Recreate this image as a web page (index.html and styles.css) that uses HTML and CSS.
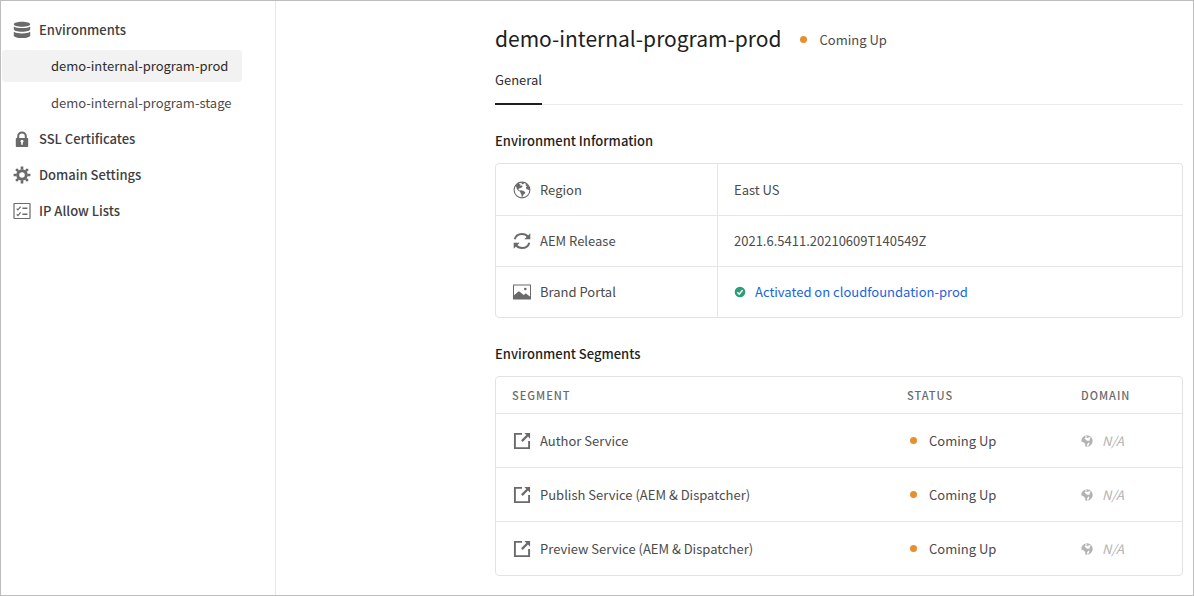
FILE: index.html
```html
<!DOCTYPE html>
<html lang="en">
<head>
<meta charset="utf-8">
<meta name="viewport" content="width=device-width, initial-scale=1">
<title>demo-internal-program-prod</title>
<link rel="stylesheet" href="styles.css">
</head>
<body>
<svg class="sprite" aria-hidden="true">
  <symbol id="icon-globe" viewBox="0 0 18 18">
    <circle cx="9" cy="9" r="7.900" fill="none" stroke="currentColor" stroke-width="1.100"/>
    <path d="M2.400 4.600 4.500 2.200 6.400 1.400 6 2.900 7.500 3.600 7.300 5 9 4.300 9.600 5.600 8 7 6.400 7.300 5.300 8.400 6.400 9.500 8.300 9.300 10.500 10 12.300 11.200 11.800 12.700 10.500 13.600 9.800 15.500 8.700 15.900 8.400 13.500 7.500 12 7.200 10.700 5 9.600 3.800 7.800 3.300 6z"/>
    <path d="M8 1.300 11.300 1.500 10.500 3 9 3.200zM13 2.600 15.300 4.800 16.700 7.800 16.500 9.500 15 8.600 13.500 8.200 12.900 6.600 13.900 5.400 12.600 4.200z"/>
  </symbol>
  <symbol id="icon-globe-solid" viewBox="0 0 12 12">
    <circle cx="6" cy="6" r="5.700"/>
    <path fill="#fff" d="M4.300 0 5.900 1.200 5 2.300 6.800 3 8.600 2.100 9.800 2.700 8.500 4.300 9 5.200 7.600 5.800 6.300 5.700 5.200 5.200 4.500 4.300 3.500 3.300 4.700 2.500zM0 6.600 2 7 3.300 8 4.300 9.600 4.100 12 1.600 10.800zM7.300 7.500 8.400 8 8.100 9.500 6.400 12 6 9.800z"/>
  </symbol>
  <symbol id="icon-open" viewBox="0 0 18 18">
    <path d="M9 1.900H1.900v14.200h14.200V9" fill="none" stroke="currentColor" stroke-width="1.900"/>
    <path d="M11.300.9H17.100v5.800l-2.100-2.100-5.300 5.300-1.600-1.600L13.400 3z"/>
  </symbol>
</svg>
<div class="app">
  <nav class="sidebar" aria-label="Environments">
    <ul class="nav">
      <li>
        <a class="nav-link" href="#">
          <svg class="icon" viewBox="0 0 18 18" aria-hidden="true"><path d="M9 .8c4.700 0 8.200 1 8.200 2.500S13.700 5.800 9 5.800.8 4.800.8 3.300 4.300.8 9 .8zM.8 5.400C2.300 6.600 5.300 7.100 9 7.100s6.700-.5 8.200-1.700v2.900c0 1.500-3.500 2.500-8.200 2.500S.8 9.800.8 8.300zM.8 10.800C2.300 12 5.300 12.500 9 12.500s6.700-.5 8.200-1.700v3.700c0 1.500-3.500 2.600-8.200 2.600S.8 16 .8 14.500z"/></svg>
          Environments
        </a>
        <ul class="subnav">
          <li><a class="nav-link nav-link-sub is-active" href="#" aria-current="page">demo-internal-program-prod</a></li>
          <li><a class="nav-link nav-link-sub" href="#">demo-internal-program-stage</a></li>
        </ul>
      </li>
      <li>
        <a class="nav-link" href="#">
          <svg class="icon" viewBox="0 0 18 18" aria-hidden="true"><path fill-rule="evenodd" d="M4.200 8V6.200a4.800 4.800 0 0 1 9.600 0V8h.7c.4 0 .7.3.7.7v7.600c0 .4-.3.7-.7.7h-11c-.4 0-.7-.3-.7-.7V8.700c0-.4.3-.7.7-.7zM6.200 8h5.600V6.200a2.800 2.800 0 0 0-5.600 0zM8.200 14.800h1.600v-2.200a1.500 1.500 0 1 0-1.600 0z"/></svg>
          SSL Certificates
        </a>
      </li>
      <li>
        <a class="nav-link" href="#">
          <svg class="icon" viewBox="0 0 18 18" aria-hidden="true">
            <g stroke="currentColor" stroke-width="2.600"><path d="M9 .6v3M9 14.400v3M.6 9h3M14.400 9h3M3.100 3.100l2.100 2.100M12.800 12.800l2.100 2.100M14.900 3.100l-2.100 2.100M5.200 12.800l-2.100 2.100"/></g>
            <circle cx="9" cy="9" r="4.300" fill="none" stroke="currentColor" stroke-width="3"/>
          </svg>
          Domain Settings
        </a>
      </li>
      <li>
        <a class="nav-link" href="#">
          <svg class="icon" viewBox="0 0 18 18" aria-hidden="true"><g fill="none" stroke="currentColor"><rect x="1" y="1.500" width="16" height="15" rx=".5" stroke-width="1.200"/><path d="M9.400 6.300h5M9.400 12.200h5" stroke-width="1.600"/><path d="m3.700 6.700 1.200 1.200 2.700-3.300M3.700 12.400l1.200 1.200 2.700-3.300" stroke-width="1.200"/></g></svg>
          IP Allow Lists
        </a>
      </li>
    </ul>
  </nav>

  <main class="content">
    <header class="page-header">
      <h1 class="title">demo-internal-program-prod</h1>
      <span class="status"><span class="dot"></span>Coming Up</span>
    </header>

    <div class="tabs" role="tablist">
      <button class="tab" type="button" role="tab" aria-selected="true">General</button>
    </div>

    <section class="section">
      <h2 class="section-title">Environment Information</h2>
      <table class="table info-table">
        <tbody>
          <tr>
            <th scope="row"><span class="label"><svg class="icon" aria-hidden="true"><use href="#icon-globe"/></svg>Region</span></th>
            <td>East US</td>
          </tr>
          <tr>
            <th scope="row"><span class="label"><svg class="icon" viewBox="0 0 18 18" aria-hidden="true"><g fill="none" stroke="currentColor" stroke-width="2"><path d="M1.700 7.200C2.600 4 5.500 1.900 9 1.900c2.500 0 4.600 1 6 2.900M16.300 10.800C15.400 14 12.500 16.100 9 16.100c-2.500 0-4.600-1-6-2.900"/></g><path d="M17.300 1.300v6h-6zM.7 16.700v-6h6z"/></svg>AEM Release</span></th>
            <td>2021.6.5411.20210609T140549Z</td>
          </tr>
          <tr>
            <th scope="row"><span class="label"><svg class="icon" viewBox="0 0 18 18" aria-hidden="true"><rect x=".5" y="2" width="17" height="14" fill="none" stroke="currentColor"/><circle cx="12.300" cy="6" r="1.300"/><path d="M1 12.300 5.200 8.800c.5-.4 1-.4 1.500 0l4 3.300 1.300-1.200c.5-.4 1.100-.4 1.600 0L17 13.500V16H1z"/></svg>Brand Portal</span></th>
            <td><span class="portal"><svg class="check" viewBox="0 0 12 12" aria-hidden="true"><circle cx="6" cy="6" r="5.300"/><path d="m3.300 6.200 1.900 2 3.500-4.200" fill="none" stroke="#fff" stroke-width="1.400"/></svg><a class="link" href="#">Activated on cloudfoundation-prod</a></span></td>
          </tr>
        </tbody>
      </table>
    </section>

    <section class="section">
      <h2 class="section-title">Environment Segments</h2>
      <table class="table segment-table">
        <thead>
          <tr><th scope="col">SEGMENT</th><th class="col-status" scope="col">STATUS</th><th class="col-domain" scope="col">DOMAIN</th></tr>
        </thead>
        <tbody>
          <tr>
            <td><span class="label"><svg class="icon" aria-hidden="true"><use href="#icon-open"/></svg>Author Service</span></td>
            <td><span class="status"><span class="dot"></span>Coming Up</span></td>
            <td><span class="domain"><svg class="globe" aria-hidden="true"><use href="#icon-globe-solid"/></svg>N/A</span></td>
          </tr>
          <tr>
            <td><span class="label"><svg class="icon" aria-hidden="true"><use href="#icon-open"/></svg>Publish Service (AEM &amp; Dispatcher)</span></td>
            <td><span class="status"><span class="dot"></span>Coming Up</span></td>
            <td><span class="domain"><svg class="globe" aria-hidden="true"><use href="#icon-globe-solid"/></svg>N/A</span></td>
          </tr>
          <tr>
            <td><span class="label"><svg class="icon" aria-hidden="true"><use href="#icon-open"/></svg>Preview Service (AEM &amp; Dispatcher)</span></td>
            <td><span class="status"><span class="dot"></span>Coming Up</span></td>
            <td><span class="domain"><svg class="globe" aria-hidden="true"><use href="#icon-globe-solid"/></svg>N/A</span></td>
          </tr>
        </tbody>
      </table>
    </section>
  </main>
</div>
</body>
</html>
```
FILE: styles.css
```css
* { box-sizing: border-box; }

body {
  margin: 0;
  font: 13px/20px "Noto Sans CJK SC", "Noto Sans", sans-serif;
  color: #4b4b4b;
  background: #fff;
}

ul { margin: 0; padding: 0; list-style: none; }
svg { fill: currentColor; flex: none; }
.sprite { display: none; }

.app {
  display: flex;
  min-height: 100vh;
  border: 1px solid #bdbdbd;
}

.sidebar {
  flex: none;
  width: 275px;
  padding: 13px 33px 0 1px;
  border-right: 1px solid #e6e6e6;
}

.nav { display: grid; gap: 4px; }
.subnav { display: grid; gap: 5px; margin-top: 4px; }

.nav-link {
  display: flex;
  align-items: center;
  gap: 8px;
  height: 32px;
  padding: 0 11px;
  border-radius: 4px;
  font-weight: 500;
  color: #3e3e3e;
  text-decoration: none;
  white-space: nowrap;
}
.nav-link-sub { padding-left: 49px; font-weight: 400; color: #4b4b4b; }
.nav-link-sub.is-active { background: #f2f2f2; color: #2c2c2c; }

.icon { width: 18px; height: 18px; color: #6a6a6a; }

.content { flex: 1; min-width: 0; padding: 19px 10px 16px 219px; }

.page-header { display: flex; align-items: center; gap: 19px; }
.page-header .status { padding-top: 3px; }
.title { margin: 0; font-size: 21px; line-height: 36px; font-weight: 400; color: #1e1e1e; }

.status { display: flex; align-items: center; gap: 12px; }
.dot { width: 7px; height: 7px; border-radius: 50%; background: #e68f2e; }

.tabs { display: flex; margin-top: 14px; border-bottom: 1px solid #ebebeb; }
.tab {
  margin-bottom: -1px;
  padding: 0 0 13px;
  border: 0;
  border-bottom: 2px solid #1e1e1e;
  background: none;
  font: inherit;
  color: #2c2c2c;
}

.section { margin-top: 26px; }
.section-title { margin: 0 0 12px; font-size: 13px; line-height: 20px; font-weight: 500; color: #1e1e1e; }

.table {
  width: 100%;
  border: 1px solid #e3e3e3;
  border-radius: 4px;
  border-spacing: 0;
  table-layout: fixed;
}
.table th, .table td { padding: 0 16px; text-align: left; font-weight: 400; }
.table tr + tr > *, .table tbody:not(:first-child) tr > * { border-top: 1px solid #e6e6e6; }

.label { display: flex; align-items: center; gap: 9px; margin-left: 1px; }

.info-table tr > * { height: 51px; }
.info-table th { width: 222px; border-right: 1px solid #e6e6e6; }
.portal { display: flex; align-items: center; gap: 9px; }
.check { width: 12px; height: 12px; color: #2d9d78; }
.link { color: #1b64dc; text-decoration: none; }

.segment-table thead th { height: 36px; font-size: 11px; font-weight: 500; letter-spacing: 1px; color: #6a6a6a; }
.segment-table tbody td { height: 54px; }
.segment-table .col-status { width: 174px; }
.segment-table .col-domain { width: 117px; }
.segment-table td .status { margin-left: 3px; }
.domain { display: flex; align-items: center; gap: 9px; font-style: italic; color: #b3b3b3; }
.globe { width: 12px; height: 12px; }
```
